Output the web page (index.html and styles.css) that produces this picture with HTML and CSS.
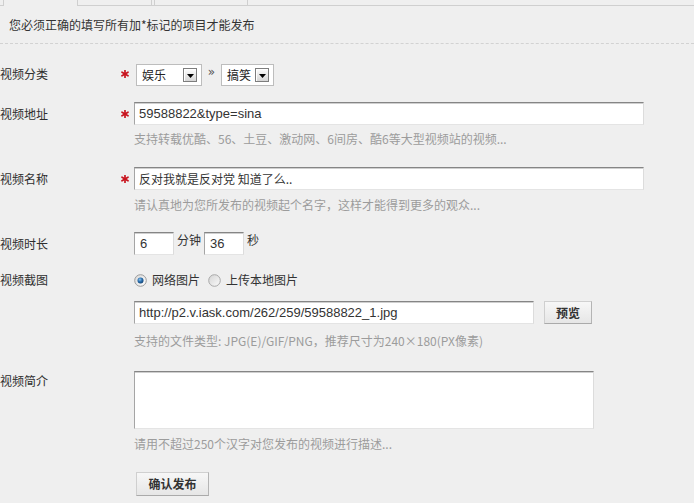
FILE: index.html
```html
<!DOCTYPE html>
<html lang="zh-CN">
<head>
<meta charset="utf-8">
<title>视频发布</title>
<link rel="stylesheet" href="styles.css">
</head>
<body>
<div class="tabs">
  <div class="tab-stub"></div>
  <div class="tab tab-active"></div>
  <div class="tab tab-2"></div>
  <div class="tab-gap"></div>
  <div class="tab tab-3"></div>
  <div class="tab-rest"></div>
</div>
<div class="notice">您必须正确的填写所有加*标记的项目才能发布</div>

<form class="form">
  <div class="row row-cat">
    <div class="label">视频分类</div>
    <div class="star"><svg width="8" height="8" viewBox="0 0 8 8"><g stroke="#c8141e" stroke-width="1.7" stroke-linecap="round"><line x1="4" y1="0.6" x2="4" y2="7.4"/><line x1="1" y1="2.2" x2="7" y2="5.8"/><line x1="1" y1="5.8" x2="7" y2="2.2"/></g></svg></div>
    <div class="field field-inline">
      <div class="select sel-1"><span class="sel-text">娱乐</span><span class="sel-btn"><svg width="7" height="4" viewBox="0 0 7 4"><path d="M0 0H7L3.5 4Z" fill="#000"/></svg></span></div>
      <span class="raquo">»</span>
      <div class="select sel-2"><span class="sel-text">搞笑</span><span class="sel-btn"><svg width="7" height="4" viewBox="0 0 7 4"><path d="M0 0H7L3.5 4Z" fill="#000"/></svg></span></div>
    </div>
  </div>

  <div class="row row-url">
    <div class="label">视频地址</div>
    <div class="star"><svg width="8" height="8" viewBox="0 0 8 8"><g stroke="#c8141e" stroke-width="1.7" stroke-linecap="round"><line x1="4" y1="0.6" x2="4" y2="7.4"/><line x1="1" y1="2.2" x2="7" y2="5.8"/><line x1="1" y1="5.8" x2="7" y2="2.2"/></g></svg></div>
    <div class="field">
      <input class="text wide" type="text" value="59588822&amp;type=sina">
      <div class="hint hint-1">支持转载优酷、56、土豆、激动网、6间房、酷6等大型视频站的视频...</div>
    </div>
  </div>

  <div class="row row-name">
    <div class="label">视频名称</div>
    <div class="star"><svg width="8" height="8" viewBox="0 0 8 8"><g stroke="#c8141e" stroke-width="1.7" stroke-linecap="round"><line x1="4" y1="0.6" x2="4" y2="7.4"/><line x1="1" y1="2.2" x2="7" y2="5.8"/><line x1="1" y1="5.8" x2="7" y2="2.2"/></g></svg></div>
    <div class="field">
      <input class="text wide cjk" type="text" value="反对我就是反对党 知道了么..">
      <div class="hint hint-2">请认真地为您所发布的视频起个名字，这样才能得到更多的观众...</div>
    </div>
  </div>

  <div class="row row-dur">
    <div class="label">视频时长</div>
    <div class="star"></div>
    <div class="field field-inline dur">
      <input class="text small" type="text" value="6">
      <span class="unit">分钟</span>
      <input class="text small" type="text" value="36">
      <span class="unit">秒</span>
    </div>
  </div>

  <div class="row row-pic">
    <div class="label">视频截图</div>
    <div class="star"></div>
    <div class="field">
      <div class="radios">
        <span class="radio-item">
          <svg width="13" height="13" viewBox="0 0 13 13"><defs><linearGradient id="rg1" x1="0" y1="0" x2="1" y2="1"><stop offset="0" stop-color="#d8d8d8"/><stop offset="1" stop-color="#ffffff"/></linearGradient><radialGradient id="dot" cx="0.4" cy="0.35" r="0.7"><stop offset="0" stop-color="#8ec4ee"/><stop offset="0.5" stop-color="#2a6fae"/><stop offset="1" stop-color="#123f6e"/></radialGradient></defs><circle cx="6.5" cy="6.5" r="5.8" fill="url(#rg1)" stroke="#9a9a9a" stroke-width="1"/><circle cx="6.5" cy="6.5" r="3" fill="url(#dot)"/></svg>
          <span>网络图片</span>
        </span>
        <span class="radio-item">
          <svg width="13" height="13" viewBox="0 0 13 13"><defs><linearGradient id="rg2" x1="0" y1="0" x2="1" y2="1"><stop offset="0" stop-color="#d4d4d4"/><stop offset="1" stop-color="#fbfbfb"/></linearGradient></defs><circle cx="6.5" cy="6.5" r="5.8" fill="url(#rg2)" stroke="#a8a8a8" stroke-width="1"/></svg>
          <span>上传本地图片</span>
        </span>
      </div>
      <div class="url-line">
        <input class="text url" type="text" value="http://p2.v.iask.com/262/259/59588822_1.jpg">
        <button class="btn btn-preview" type="button">预览</button>
      </div>
      <div class="hint hint-3">支持的文件类型: JPG(E)/GIF/PNG，推荐尺寸为240×180(PX像素)</div>
    </div>
  </div>

  <div class="row row-desc">
    <div class="label">视频简介</div>
    <div class="star"></div>
    <div class="field">
      <textarea class="area"></textarea>
      <div class="hint hint-4">请用不超过250个汉字对您发布的视频进行描述...</div>
    </div>
  </div>

  <div class="row row-submit">
    <div class="label"></div>
    <div class="star"></div>
    <div class="field">
      <button class="btn btn-submit" type="button">确认发布</button>
    </div>
  </div>
</form>
</body>
</html>
```

FILE: styles.css
```css
html, body {
  margin: 0;
  padding: 0;
  background: #efefef;
}
body {
  font-family: "Noto Sans CJK SC", "Liberation Sans", sans-serif;
  font-size: 12px;
  color: #333;
  overflow: hidden;
  width: 694px;
  height: 503px;
}

/* tabs */
.tabs {
  display: flex;
  height: 6px;
}
.tabs > div {
  box-sizing: border-box;
  height: 6px;
}
.tab-stub {
  width: 3px;
  border-bottom: 1px solid #cfcfcf;
}
.tab-active {
  width: 74px;
  border-left: 1px solid #cfcfcf;
}
.tab-2 {
  width: 75px;
  border-left: 1px solid #cfcfcf;
  border-right: 1px solid #cfcfcf;
  border-bottom: 1px solid #cfcfcf;
}
.tab-gap {
  width: 2px;
  border-bottom: 1px solid #cfcfcf;
}
.tab-3 {
  width: 94px;
  border-left: 1px solid #cfcfcf;
  border-right: 1px solid #cfcfcf;
  border-bottom: 1px solid #cfcfcf;
}
.tab-rest {
  flex: 1;
  border-bottom: 1px solid #cfcfcf;
}

.notice {
  padding: 11px 0 10px 9px;
  line-height: 16px;
  color: #333;
  border-bottom: 1px dashed #d2d2d2;
}

/* form rows */
.form {
  margin: 0;
}
.row {
  display: grid;
  grid-template-columns: 121px 13px 1fr;
  align-items: start;
}
.label {
  line-height: 23px;
  color: #2e2e2e;
  white-space: nowrap;
}
.star {
  height: 23px;
  display: flex;
  align-items: center;
}
.star svg { display: block; }

.row-cat { margin-top: 20px; }
.row-cat .label { line-height: 19px; }
.row-cat .star { height: 19px; }
.row-url { margin-top: 16px; }
.row-name { margin-top: 20px; }
.row-dur { margin-top: 19px; }
.row-pic { margin-top: 17px; }
.row-pic .label { line-height: 16px; }
.row-desc { margin-top: 22px; }
.row-desc .label { line-height: 20px; }
.row-submit { margin-top: 20px; }

.field { min-width: 0; }
.field-inline {
  display: flex;
  align-items: center;
}

/* select */
.select {
  box-sizing: border-box;
  height: 22px;
  display: flex;
  align-items: center;
  justify-content: space-between;
  background: #fff;
  border: 1px solid #bdbdbd;
  padding: 0 4px 0 5px;
}
.sel-1 { width: 66px; margin-left: 2px; }
.sel-2 { width: 53px; }
.sel-text {
  line-height: 16px;
  color: #222;
}
.sel-btn {
  box-sizing: border-box;
  width: 14px;
  height: 14px;
  border: 1px solid #7d7d7d;
  background: linear-gradient(#fdfdfd, #d6d6d6);
  display: flex;
  align-items: center;
  justify-content: center;
  box-shadow: inset 1px 1px 0 #fff;
}
.sel-btn svg { display: block; margin-top: 1px; }
.raquo {
  width: 19px;
  text-align: center;
  font-family: "DejaVu Sans", sans-serif;
  font-size: 12px;
  line-height: 12px;
  color: #555;
  align-self: flex-start;
  margin-top: 2px;
}

/* text inputs */
.text {
  box-sizing: border-box;
  display: block;
  height: 23px;
  margin: 0;
  padding: 0 0 0 4px;
  background: #fff;
  border: 1px solid;
  border-color: #858585 #dcdcdc #e4e4e4 #a5a5a5;
  box-shadow: inset 0 1px 0 #cfcfcf;
  font-family: "Liberation Sans", "Noto Sans CJK SC", sans-serif;
  font-size: 13px;
  color: #333;
  outline: none;
}
.text.cjk {
  font-family: "Noto Sans CJK SC", sans-serif;
  font-size: 12px;
}
.wide { width: 510px; }
.small { width: 40px; padding-left: 5px; }
.url { width: 400px; }

.dur { align-items: flex-start; }
.unit {
  line-height: 16px;
  margin: 0 3px;
  color: #333;
}

.hint {
  line-height: 16px;
  color: #9c9c9c;
  white-space: nowrap;
}
.hint-1 { margin-top: 6px; }
.hint-2 { margin-top: 7px; }
.hint-3 { margin-top: 9px; }
.hint-4 { margin-top: 7px; }

/* radios */
.radios {
  display: flex;
  align-items: center;
  height: 16px;
}
.radio-item {
  display: flex;
  align-items: center;
  line-height: 16px;
  margin-right: 8px;
}
.radio-item svg {
  display: block;
  margin-right: 5px;
}

.url-line {
  display: flex;
  align-items: flex-start;
  margin-top: 13px;
}

/* buttons */
.btn {
  box-sizing: border-box;
  margin: 0;
  padding: 0;
  font-family: "Noto Sans CJK SC", sans-serif;
  font-size: 12px;
  font-weight: bold;
  color: #333;
  background: linear-gradient(#f7f7f7, #e6e6e6);
  border: 1px solid;
  border-color: #d0d0d0 #b4b4b4 #aaaaaa #cfcfcf;
  line-height: 16px;
  cursor: pointer;
}
.btn-preview {
  width: 48px;
  height: 23px;
  margin-left: 10px;
}
.btn-submit {
  width: 73px;
  height: 24px;
  margin-left: 2px;
}

/* textarea */
.area {
  box-sizing: border-box;
  display: block;
  width: 460px;
  height: 58px;
  margin: 0;
  padding: 2px 4px;
  resize: none;
  background: #fff;
  border: 1px solid;
  border-color: #858585 #dcdcdc #e4e4e4 #a5a5a5;
  box-shadow: inset 0 1px 0 #cfcfcf;
  font-family: "Noto Sans CJK SC", sans-serif;
  font-size: 12px;
  outline: none;
}
```
